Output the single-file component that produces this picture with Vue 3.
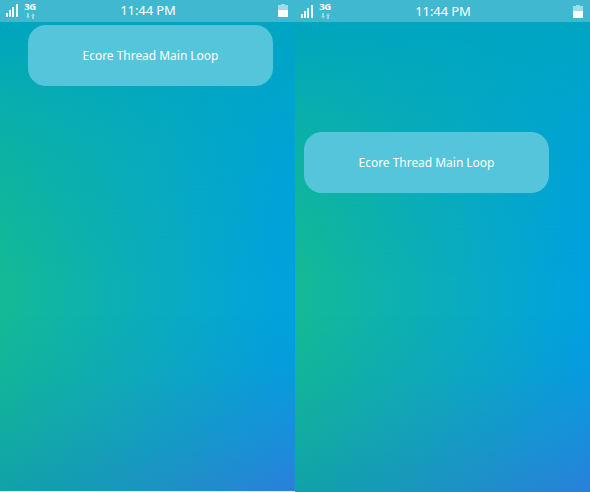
<script setup>
const phones = [
  { id: 'before', label: 'Ecore Thread Main Loop' },
  { id: 'after', label: 'Ecore Thread Main Loop' },
]
</script>

<template>
  <main class="stage">
    <section v-for="phone in phones" :key="phone.id" class="phone" :class="phone.id">
      <header class="status">
        <div class="network">
          <svg class="signal" width="12" height="14" viewBox="0 0 12 14" shape-rendering="crispEdges">
            <path d="M0 9h2v4H0zM3 6h2v7H3zM6 3h2v10H6zM10 0h2v13h-2z" fill="#f0fafc" />
          </svg>
          <div class="mobile">
            <span class="generation">3G</span>
            <svg class="arrows" width="9" height="6" viewBox="0 0 9 6">
              <path d="M1 0h2v3h1L2 5.8 0 3h1zM6 6h2V3h1L7 0 5 3h1z" fill="#93d8e5" />
            </svg>
          </div>
        </div>
        <time class="clock">11:44 PM</time>
        <svg class="battery" width="10" height="14" viewBox="0 0 10 14" shape-rendering="crispEdges">
          <path d="M3 0h4v1h3v6H0V1h3z" fill="#9fdce7" />
          <path d="M0 6h10v7H0z" fill="#fff" />
        </svg>
      </header>
      <button class="action" type="button"><span>{{ phone.label }}</span></button>
    </section>
  </main>
</template>

<style>
body {
  margin: 0;
  background: #d5edf7;
}
</style>

<style scoped>
.stage {
  display: flex;
  align-items: flex-start;
  width: 590px;
  height: 492px;
  overflow: hidden;
  font-family: "Noto Sans", sans-serif;
}

.phone {
  position: relative;
  isolation: isolate;
  box-sizing: border-box;
  width: 295px;
  height: 492px;
  background: linear-gradient(91deg, #14ba94 0%, #0badbc 50%, #00a2df 96%, #00a1e2 100%);
}

.before {
  height: 491px;
}

.phone::before,
.phone::after {
  content: "";
  position: absolute;
  inset: 0;
  z-index: -1;
}

.phone::before {
  background: linear-gradient(90deg, #00a5be, #00a5c3);
  mask-image: linear-gradient(180deg, #000 5%, rgb(0 0 0 / 0.7) 16%, rgb(0 0 0 / 0.34) 31%, transparent 56%);
}

.phone::after {
  background: linear-gradient(90deg, #10a2a8, #1c92c2 50%, #2a80da);
  mask-image: linear-gradient(180deg, transparent 64%, rgb(0 0 0 / 0.2) 76%, rgb(0 0 0 / 0.56) 88%, #000 100%);
}

.status {
  display: flex;
  justify-content: space-between;
  align-items: flex-start;
  box-sizing: border-box;
  height: 22px;
  padding: 4px 7px 0 6px;
  background: #40b9d0;
  color: #fff;
}

.before .status {
  height: 21.5px;
}

.after .signal,
.after .battery {
  height: 15px;
}

.network {
  display: flex;
  flex: none;
  gap: 6px;
  width: 64px;
}

.signal,
.arrows,
.battery {
  display: block;
}

.mobile {
  display: flex;
  flex-direction: column;
  align-items: center;
  gap: 1px;
  width: 12px;
}

.generation {
  height: 8px;
  font: 700 9.5px/6px "Noto Sans", sans-serif;
  letter-spacing: -0.3px;
}

.clock {
  width: 80px;
  margin-right: auto;
  margin-left: 38px;
  font-size: 13px;
  line-height: 13px;
  letter-spacing: -0.1px;
  text-align: center;
}

.after .clock {
  line-height: 14px;
}

.battery {
  flex: none;
}

.action {
  display: flex;
  justify-content: center;
  align-items: center;
  width: 245px;
  height: 61px;
  margin: 3.5px 0 0 28px;
  padding: 0;
  border: 0;
  border-radius: 18px;
  background: #54c5da;
  color: #fff;
  font: 400 12px/16px "Noto Sans", sans-serif;
  letter-spacing: -0.03px;
}

.after .action {
  margin: 110px 0 0 9px;
}
</style>
